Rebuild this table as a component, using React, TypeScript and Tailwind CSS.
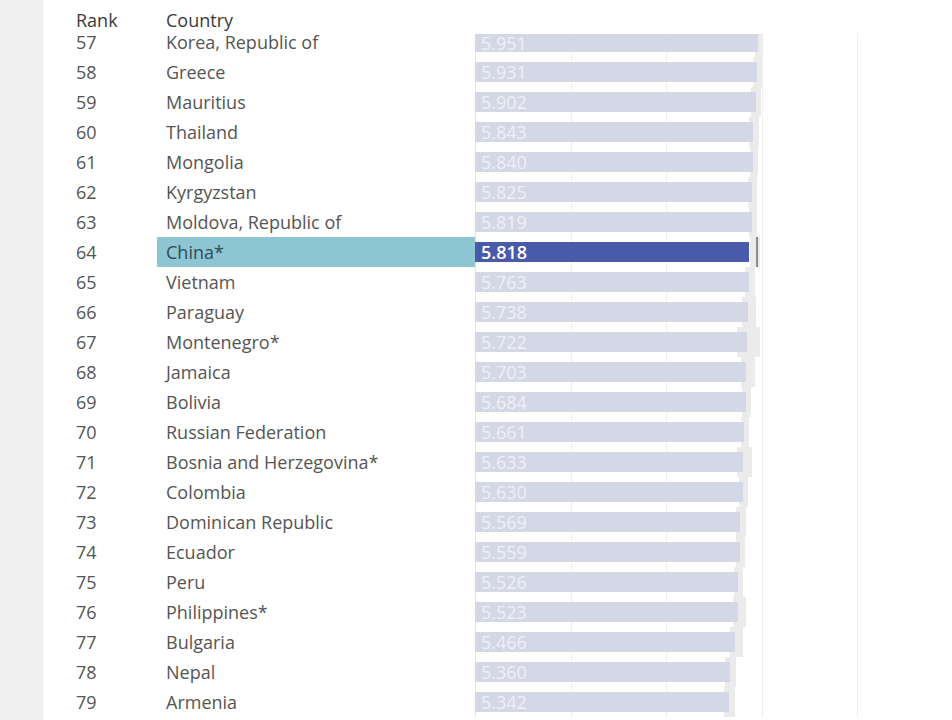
const SCALE = 47.6;

type Row = { rank: number; country: string; score: number; lo: number; hi: number };

const rows: Row[] = [
  { rank: 57, country: 'Korea, Republic of', score: 5.951, lo: 3, hi: 5 },
  { rank: 58, country: 'Greece', score: 5.931, lo: 4, hi: 5 },
  { rank: 59, country: 'Mauritius', score: 5.902, lo: 5, hi: 5 },
  { rank: 60, country: 'Thailand', score: 5.843, lo: 4, hi: 6 },
  { rank: 61, country: 'Mongolia', score: 5.84, lo: 3, hi: 5 },
  { rank: 62, country: 'Kyrgyzstan', score: 5.825, lo: 4, hi: 5 },
  { rank: 63, country: 'Moldova, Republic of', score: 5.819, lo: 3, hi: 5 },
  { rank: 64, country: 'China*', score: 5.818, lo: 2, hi: 8 },
  { rank: 65, country: 'Vietnam', score: 5.763, lo: 4, hi: 6 },
  { rank: 66, country: 'Paraguay', score: 5.738, lo: 6, hi: 8 },
  { rank: 67, country: 'Montenegro*', score: 5.722, lo: 10, hi: 13 },
  { rank: 68, country: 'Jamaica', score: 5.703, lo: 5, hi: 9 },
  { rank: 69, country: 'Bolivia', score: 5.684, lo: 4, hi: 5 },
  { rank: 70, country: 'Russian Federation', score: 5.661, lo: 3, hi: 5 },
  { rank: 71, country: 'Bosnia and Herzegovina*', score: 5.633, lo: 6, hi: 9 },
  { rank: 72, country: 'Colombia', score: 5.63, lo: 4, hi: 5 },
  { rank: 73, country: 'Dominican Republic', score: 5.569, lo: 4, hi: 6 },
  { rank: 74, country: 'Ecuador', score: 5.559, lo: 4, hi: 5 },
  { rank: 75, country: 'Peru', score: 5.526, lo: 4, hi: 5 },
  { rank: 76, country: 'Philippines*', score: 5.523, lo: 5, hi: 8 },
  { rank: 77, country: 'Bulgaria', score: 5.466, lo: 5, hi: 8 },
  { rank: 78, country: 'Nepal', score: 5.36, lo: 5, hi: 6 },
  { rank: 79, country: 'Armenia', score: 5.342, lo: 5, hi: 6 },
];

function BarCell({ row }: { row: Row }) {
  const w = row.score * SCALE;
  const active = row.rank === 64;
  const first = row.rank === 57;
  return (
    <div className={`relative h-[30px] ${first ? 'pt-[7px] pb-[5px]' : 'py-[5px]'}`}>
      <div
        className={`absolute bottom-0 bg-[#ebebeb] ${first ? 'top-[7px]' : 'top-0'}`}
        style={{ left: w - row.lo, width: row.lo + row.hi }}
      />
      <div
        className={`relative flex h-full items-center pl-[6px] text-[18px] leading-none ${
          active ? 'bg-[#4a5aab] text-white font-semibold' : 'bg-[#d4d7e6] text-[#eef0f6]'
        }`}
        style={{ width: active ? w - 3 : w }}
      >
        {row.score.toFixed(3)}
      </div>
      {active && (
        <div className="absolute top-0 bottom-0 w-[2px] bg-[#8a8a8a]" style={{ left: w + 4 }} />
      )}
    </div>
  );
}

export default function App() {
  return (
    <div className="flex h-[720px] w-[952px] overflow-hidden bg-white font-['Open_Sans','Liberation_Sans',sans-serif]">
      <div className="w-[43px] shrink-0 bg-[#f0f0f0]" />
      <div className="flex-1">
        <div className="flex h-[27px] items-end text-[18px] leading-none font-medium text-[#3a3a3a]">
          <div className="w-[114px] translate-y-[2px] pl-[33px]">Rank</div>
          <div className="translate-y-[2px] pl-[9px]">Country</div>
        </div>
        <div className="flex">
          <div className="w-[432px] shrink-0">
            {rows.map((r) => (
              <div key={r.rank} className="flex h-[30px] items-center text-[18px] leading-none text-[#555]">
                <div className="w-[114px] pl-[33px]">{r.rank}</div>
                <div
                  className={`flex h-full flex-1 items-center pl-[9px] ${
                    r.rank === 64 ? 'bg-[#8dc5d3] text-[#2f4b59]' : ''
                  }`}
                >
                  {r.country}
                </div>
              </div>
            ))}
          </div>
          <div className="relative w-[420px]">
            <div className="absolute top-[6px] bottom-0 left-0 w-px bg-[#e4e4e4]" />
            <div className="absolute top-[6px] bottom-0 left-[96px] w-px bg-[#efefef]" />
            <div className="absolute top-[6px] bottom-0 left-[191px] w-px bg-[#efefef]" />
            <div className="absolute top-[6px] bottom-0 left-[287px] w-px bg-[#efefef]" />
            <div className="absolute top-[6px] bottom-0 left-[382px] w-px bg-[#efefef]" />
            {rows.map((r) => (
              <BarCell key={r.rank} row={r} />
            ))}
          </div>
        </div>
      </div>
    </div>
  );
}
